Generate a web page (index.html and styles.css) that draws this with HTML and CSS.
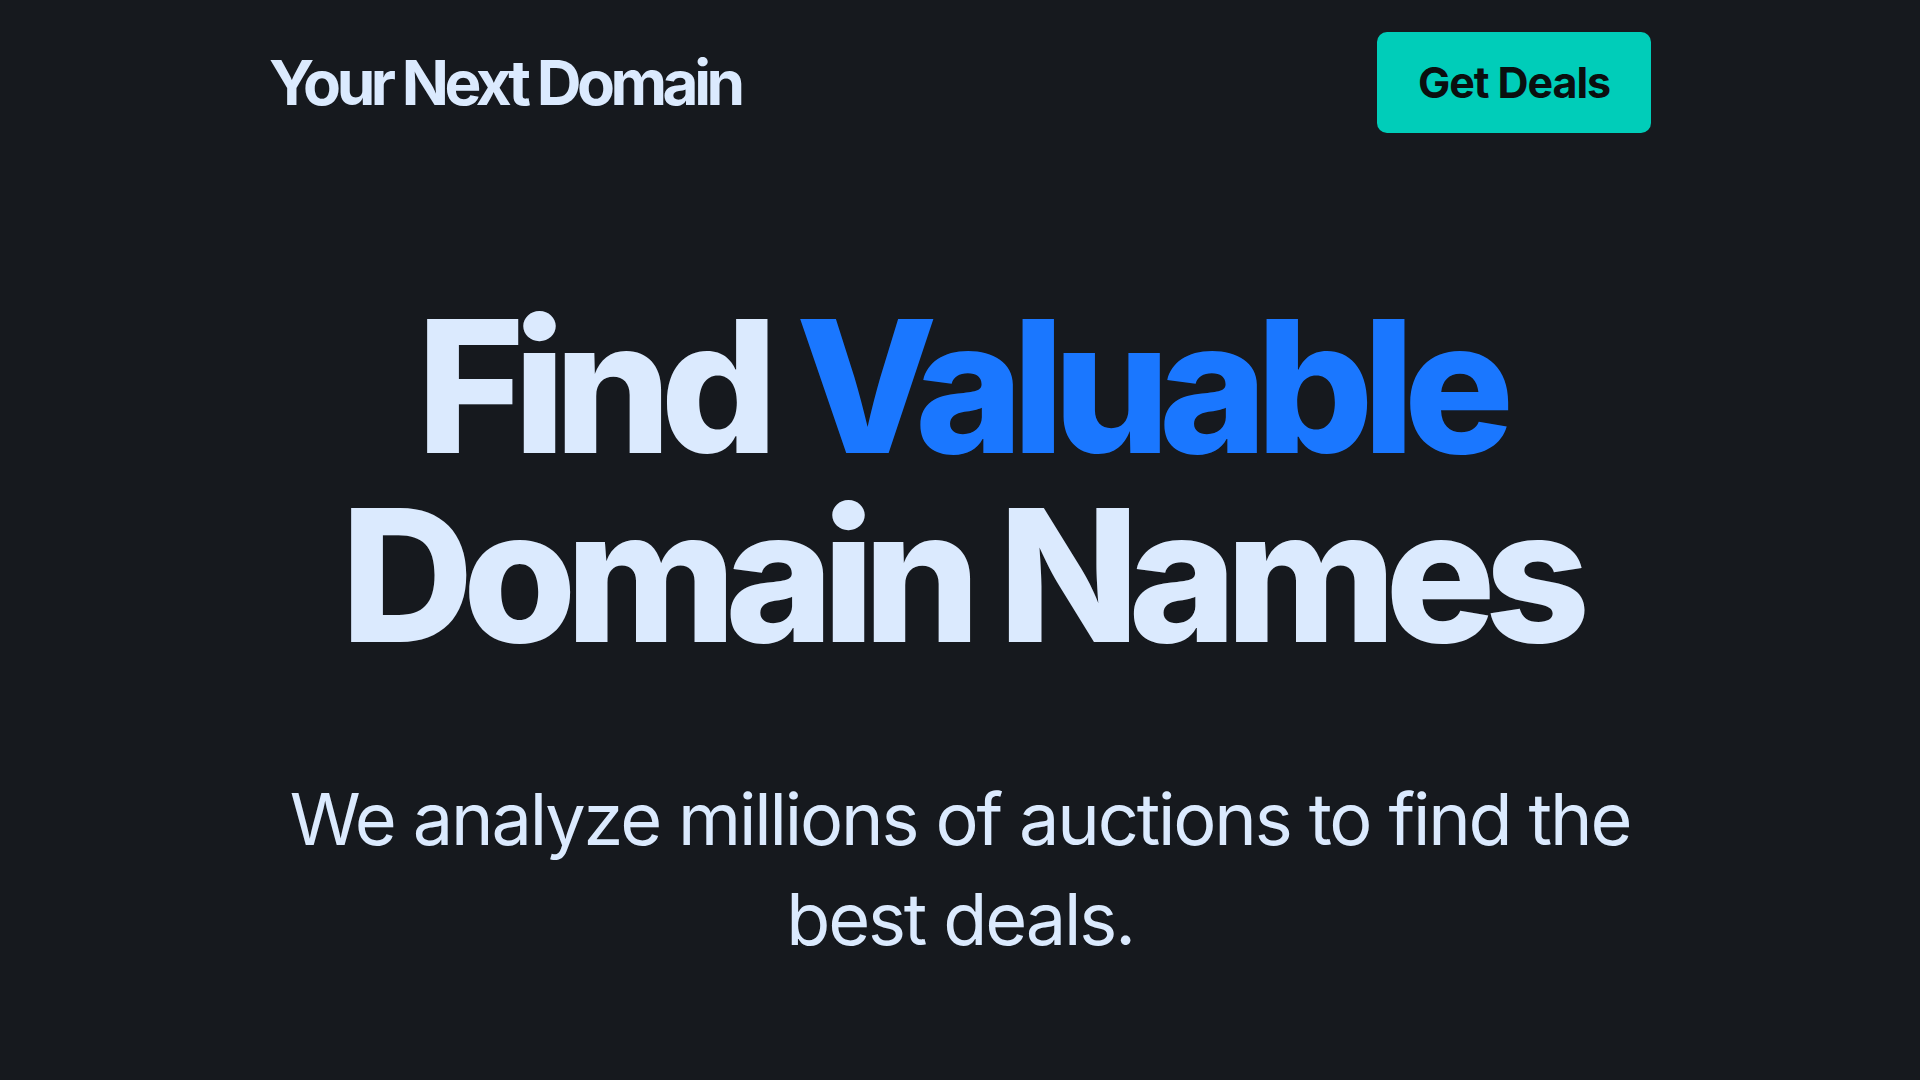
FILE: index.html
```html
<!DOCTYPE html>
<html lang="en">
<head>
    <meta charset="UTF-8">
    <meta name="viewport" content="width=device-width, initial-scale=1.0">
    <title>Your Next Domain</title>
    <link rel="stylesheet" href="styles.css">
</head>
<body>
    <header class="site-header">
        <div class="logo">Your Next Domain</div>
        <a class="deals-button" href="#">Get Deals</a>
    </header>
    <main class="hero">
        <h1 class="hero-title">Find <span class="accent">Valuable</span><br>Domain Names</h1>
        <p class="hero-text">We analyze millions of auctions to find the best deals.</p>
    </main>
</body>
</html>
```

FILE: styles.css
```css
body {
    margin: 0;
    background-color: #16191e;
    color: #dbeafe;
    font-family: Inter, "Noto Sans", sans-serif;
}

.site-header {
    width: 1382px;
    margin: 0 auto;
    padding-top: 32px;
    display: flex;
    justify-content: space-between;
    align-items: center;
}

.logo {
    font-size: 62px;
    font-weight: 700;
    letter-spacing: -0.072em;
}

.deals-button {
    display: block;
    padding: 0 41px;
    height: 101px;
    line-height: 101px;
    background-color: #00cdb9;
    color: #0a0f0f;
    border-radius: 10px;
    font-size: 43px;
    font-weight: 700;
    letter-spacing: -0.025em;
    text-decoration: none;
}

.hero {
    width: 1400px;
    margin: 0 auto;
    text-align: center;
}

.hero-title {
    margin: 159px 0 0;
    font-size: 184px;
    line-height: 189px;
    font-weight: 800;
    letter-spacing: -0.06em;
}

.accent {
    color: #1a77ff;
}

.hero-text {
    margin: 99px auto 0;
    width: 1380px;
    font-size: 72px;
    line-height: 100px;
    letter-spacing: -0.03em;
}
```
